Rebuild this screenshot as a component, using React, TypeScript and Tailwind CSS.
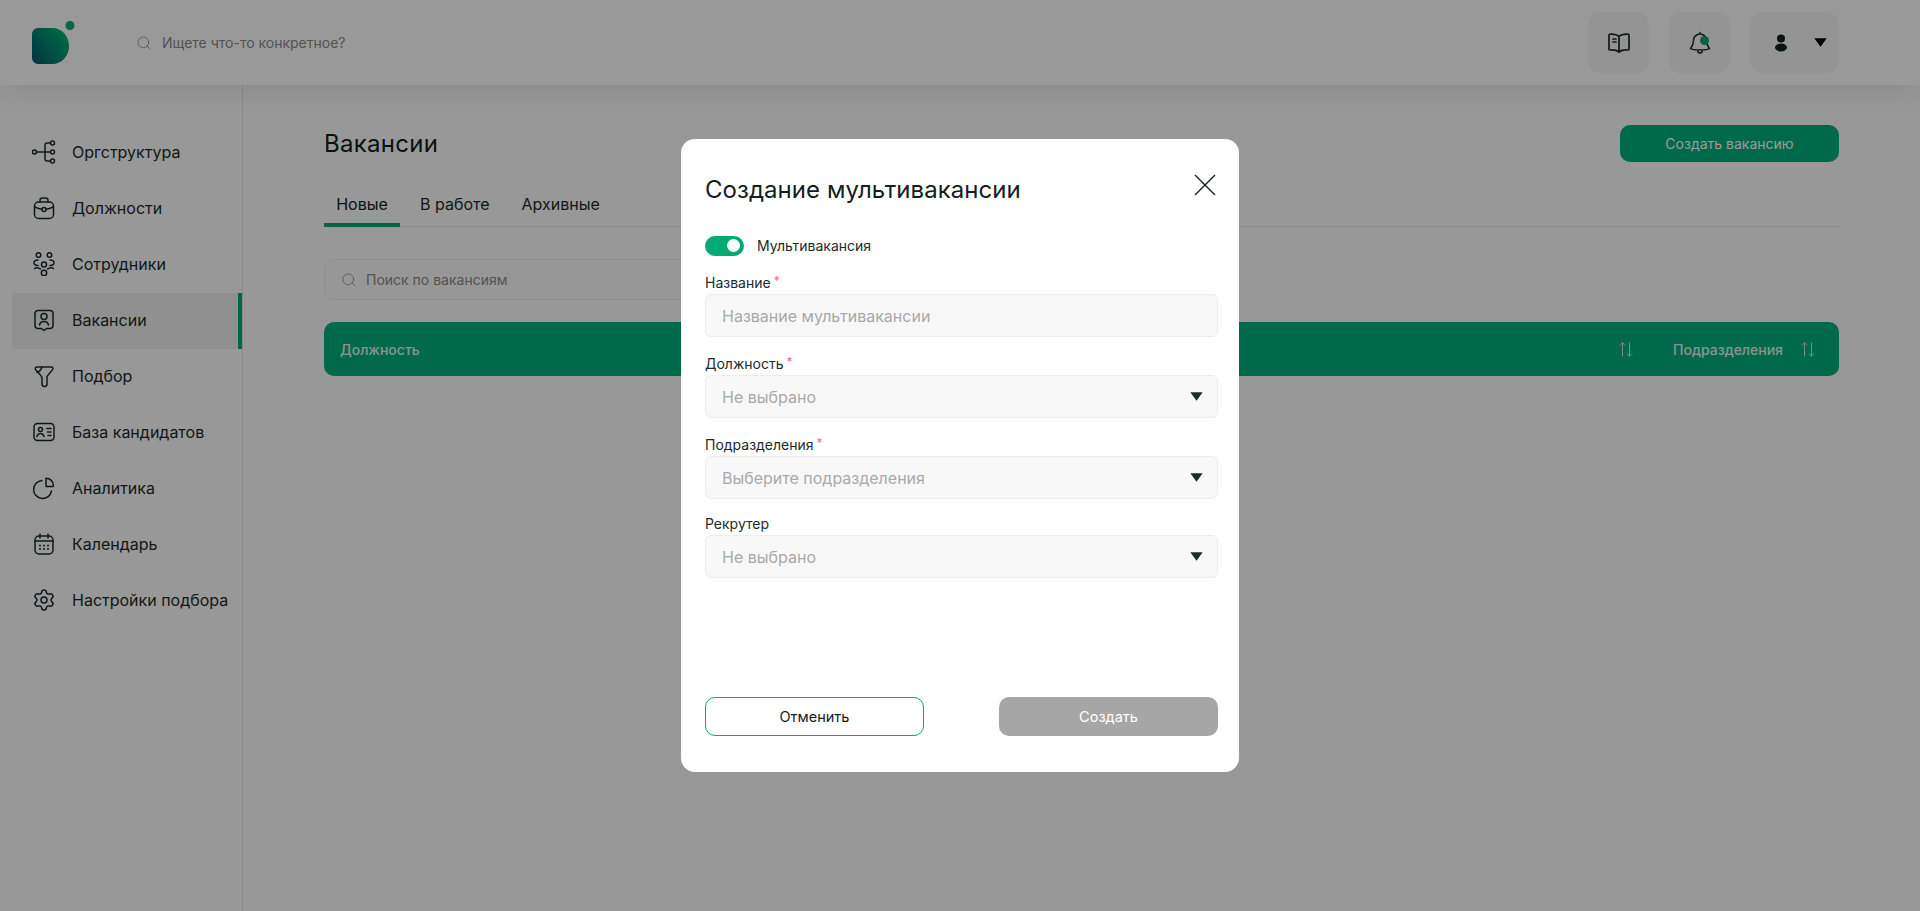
import { Search, Settings } from "lucide-react";
import type { ReactNode } from "react";

const font = { fontFamily: '"Inter", "Noto Sans", sans-serif' };

function Svg({ children, size = 24 }: { children: ReactNode; size?: number }) {
  return (
    <svg width={size} height={size} viewBox="0 0 24 24" fill="none" stroke="currentColor" strokeWidth="1.5" strokeLinecap="round" strokeLinejoin="round" className="shrink-0">
      {children}
    </svg>
  );
}

const icons: Record<string, ReactNode> = {
  org: (
    <Svg>
      <circle cx="2.500" cy="12" r="2" />
      <circle cx="20.500" cy="3" r="2" />
      <circle cx="20.500" cy="12" r="2" />
      <circle cx="20.500" cy="21" r="2" />
      <path d="M4.500 12h14M18.500 3H15a2 2 0 0 0-2 2v14a2 2 0 0 0 2 2h3.500" />
    </Svg>
  ),
  jobs: (
    <Svg>
      <rect x="2.500" y="6" width="19" height="16.500" rx="4" />
      <path d="M8 6V4.500a2.500 2.500 0 0 1 2.500-2.500h3A2.500 2.500 0 0 1 16 4.500V6" />
      <path d="M2.800 11c3 1.500 5 2 7.200 2.200M21.200 11c-3 1.500-5 2-7.200 2.200" />
      <circle cx="12" cy="13.500" r="2" />
    </Svg>
  ),
  staff: (
    <Svg>
      <circle cx="6.500" cy="3" r="2.300" />
      <circle cx="17.500" cy="3" r="2.300" />
      <circle cx="12" cy="12.500" r="2.500" />
      <circle cx="12" cy="21" r="2.700" />
      <path d="M6 8c-2.500 0-4 1.300-4 2.800S3.500 13.500 6 13.500M18 8c2.500 0 4 1.300 4 2.800s-1.500 2.700-4 2.700" />
      <path d="M2.500 16.500C3.500 15.800 6 15.700 8.500 17M21.500 16.500c-1-.7-3.500-.8-6 .5" />
    </Svg>
  ),
  vacancy: (
    <Svg>
      <path d="M6 2.500h12a3 3 0 0 1 3 3v12a3 3 0 0 1-3 3h-3.500L12 22.500l-2.500-2H6a3 3 0 0 1-3-3v-12a3 3 0 0 1 3-3Z" />
      <circle cx="12" cy="8.500" r="3" />
      <path d="M7.500 17c.5-2.500 2.500-3.500 4.500-3.500s4 1 4.500 3.500" />
    </Svg>
  ),
  funnel: (
    <Svg>
      <path d="M5 3h14.500a1.500 1.500 0 0 1 1.200 2.400L15 12.500V20a2.500 2.500 0 0 1-5 0v-6c0-1.500-1-2.500-2-3.500L3.800 6C2.500 4.500 3.500 3 5 3Z" />
      <path d="M5 8.500c2-1 4-1.500 5-5.500" />
    </Svg>
  ),
  base: (
    <Svg>
      <rect x="2" y="3.500" width="20" height="17" rx="3.500" />
      <circle cx="8.500" cy="9.500" r="2" />
      <path d="M5 16.500c.5-2 2-3 3.500-3s3 1 3.500 3M15 8.500h4M15.500 12h3.500M16 15.500h3" />
    </Svg>
  ),
  chart: (
    <Svg>
      <path d="M10 4.500A9 9 0 1 0 19.500 15" />
      <path d="M14 2.200a7.500 7.500 0 0 1 7.500 7.500c0 .5-.3.800-.8.800H14.500a.5.5 0 0 1-.5-.5V2.200Z" />
    </Svg>
  ),
  calendar: (
    <Svg>
      <rect x="3" y="4" width="18" height="18" rx="4" />
      <path d="M3 9h18M8 2v4M16 2v4" />
      <path d="M8 13.500h.01M12 13.500h.01M16 13.500h.01M8 17h.01M12 17h.01M16 17h.01" strokeWidth="2" />
    </Svg>
  ),
};

const nav = [
  { label: "Оргструктура", icon: icons.org },
  { label: "Должности", icon: icons.jobs },
  { label: "Сотрудники", icon: icons.staff },
  { label: "Вакансии", icon: icons.vacancy, active: true },
  { label: "Подбор", icon: icons.funnel },
  { label: "База кандидатов", icon: icons.base },
  { label: "Аналитика", icon: icons.chart },
  { label: "Календарь", icon: icons.calendar },
  { label: "Настройки подбора", icon: <Settings size={24} strokeWidth={1.5} className="shrink-0" /> },
];

function Caret({ className = "" }: { className?: string }) {
  return (
    <svg width="13" height="9" viewBox="0 0 13 9" className={className}>
      <path d="M0.300 0.300h12.400L6.500 8.700Z" fill="currentColor" />
    </svg>
  );
}

function SortIcon() {
  return (
    <svg width="14" height="15" viewBox="0 0 14 15" fill="none" stroke="#cfe8df" strokeWidth="1" className="shrink-0">
      <path d="M3.500 14.500V.8M.8 3.500 3.500.8l2.700 2.700M10.500.5v13.700M7.800 11.500l2.700 2.700 2.700-2.700" />
    </svg>
  );
}

function Field({ label, required, placeholder, select, labelGap }: { label: string; required?: boolean; placeholder: string; select?: boolean; labelGap: string }) {
  return (
    <div className={labelGap}>
      <div className="flex h-[18px] items-center text-[14px] leading-[18px] text-[#1c2b2b]">
        {label}
        {required && <span className="relative -top-[2px] ml-[3px] text-[12px] text-[#f4707c]">*</span>}
      </div>
      <div className="mt-[2px] flex h-[43px] items-center justify-between rounded-[6px] border border-[#ededed] bg-[#f8f8f8] pl-[16px] pr-[14px] text-[16px] text-[#a9a9a9]">
        <span>{placeholder}</span>
        {select && <Caret className="text-[#1c2b2b]" />}
      </div>
    </div>
  );
}

function Modal() {
  return (
    <div className="flex h-[633px] w-[558px] flex-col rounded-[14px] bg-white pb-[36px] pl-[24px] pr-[21px] pt-[33px]">
      <div className="flex items-start justify-between">
        <h2 className="text-[24px] leading-[36px] font-normal tracking-[0.050px] text-[#13201f]">Создание мультивакансии</h2>
        <svg width="22" height="22" viewBox="0 0 22 22" fill="none" stroke="#13201f" strokeWidth="1.400" className="mr-[2px] mt-[2px]">
          <path d="M1 1l20 20M21 1 1 21" />
        </svg>
      </div>
      <div className="mt-[27px] flex items-center gap-[13px]">
        <div className="flex h-[20px] w-[39px] items-center justify-end rounded-full bg-[#04aa74] pr-[4px]">
          <div className="h-[13px] w-[13px] rounded-full bg-white" />
        </div>
        <span className="text-[14px] text-[#1c2b2b]">Мультивакансия</span>
      </div>
      <Field labelGap="mt-[18px]" label="Название" required placeholder="Название мультивакансии" />
      <Field labelGap="mt-[18px]" label="Должность" required placeholder="Не выбрано" select />
      <Field labelGap="mt-[18px]" label="Подразделения" required placeholder="Выберите подразделения" select />
      <Field labelGap="mt-[16px]" label="Рекрутер" placeholder="Не выбрано" select />
      <div className="mt-auto flex justify-between text-[14.500px]">
        <button className="h-[39px] w-[219px] rounded-[10px] border border-[#04aa74] bg-white text-[#13201f]">Отменить</button>
        <button className="h-[39px] w-[219px] rounded-[10px] bg-[#a6a6a6] text-white">Создать</button>
      </div>
    </div>
  );
}

export default function App() {
  return (
    <div style={font} className="relative flex h-[911px] w-[1920px] flex-col overflow-hidden bg-[#fdfdfd] text-[#1c2b2b]">
      <header className="z-10 flex h-[85px] shrink-0 items-center justify-between bg-white pl-[32px] pr-[81px] shadow-[0_8px_24px_rgba(0,0,0,0.08)]">
        <div className="flex items-center">
          <svg width="44" height="44" viewBox="0 0 44 44">
            <defs>
              <linearGradient id="logo" x1="0" y1="1" x2="1" y2="0.300">
                <stop offset="0" stopColor="#00576f" />
                <stop offset="1" stopColor="#04b070" />
              </linearGradient>
            </defs>
            <path d="M6 8h14c10 0 17 8 17 18s-7 18-17 18H6a6 6 0 0 1-6-6V14a6 6 0 0 1 6-6Z" fill="url(#logo)" transform="translate(0 -1)" />
            <circle cx="38" cy="4.500" r="4.500" fill="#04b070" />
          </svg>
          <div className="ml-[60px] flex items-center gap-[10px] text-[14px] text-[#8a8a8a]">
            <Search size={16} strokeWidth={1.200} />
            <span>Ищете что-то конкретное?</span>
          </div>
        </div>
        <div className="flex gap-[20px]">
          <div className="flex h-[61px] w-[61px] items-center justify-center rounded-[12px] bg-[#f7f7f7]">
            <svg width="24" height="24" viewBox="0 0 24 24" fill="none" stroke="#1c2b2b" strokeWidth="1.700" strokeLinecap="round" strokeLinejoin="round">
              <path d="M12 5.500C10 3.500 6.500 3 3 3.200a1 1 0 0 0-1 1V18c0 .5.400 1 1 1 3.500-.2 7 .300 9 2 2-1.700 5.500-2.200 9-2 .6 0 1-.5 1-1V4.200a1 1 0 0 0-1-1C17.500 3 14 3.500 12 5.500ZM12 5.500V21" />
              <path d="M6 8h3M6 11h3" />
            </svg>
          </div>
          <div className="relative flex h-[61px] w-[61px] items-center justify-center rounded-[12px] bg-[#f7f7f7]">
            <svg width="24" height="24" viewBox="0 0 24 24" fill="none" stroke="#1c2b2b" strokeWidth="1.500" strokeLinecap="round" strokeLinejoin="round">
              <path d="M12 3a6.500 6.500 0 0 0-6.500 6.500c0 5-2.500 7-3 8 1 1 4 1.500 9.500 1.500s8.500-.5 9.500-1.500c-.5-1-3-3-3-8A6.500 6.500 0 0 0 12 3ZM12 3V1.500M9.500 19.500c.3 1.500 1.300 2.500 2.500 2.500s2.200-1 2.500-2.500" />
            </svg>
            <span className="absolute left-[31px] top-[24px] h-[9px] w-[9px] rounded-full bg-[#04aa74]" />
          </div>
          <div className="flex h-[61px] w-[89px] items-center rounded-[12px] bg-[#f7f7f7] pl-[23px]">
            <svg width="16" height="18" viewBox="0 0 16 18" fill="#13201f">
              <circle cx="8" cy="4.500" r="4" />
              <ellipse cx="8" cy="13.500" rx="6" ry="4" />
            </svg>
            <Caret className="ml-[25px] text-black" />
          </div>
        </div>
      </header>

      <div className="flex min-h-0 flex-1">
        <aside className="w-[243px] shrink-0 border-r border-[#e4e4e4] pl-[12px] pt-[40px]">
          {nav.map((item) => (
            <div key={item.label} className={`flex h-[56px] items-center pb-[2px] pl-[20px] ${item.active ? "border-r-[4px] border-[#04aa74] bg-[#f0f0f0]" : ""}`}>
              {item.icon}
              <span className="ml-[16px] text-[16px] whitespace-nowrap">{item.label}</span>
            </div>
          ))}
        </aside>

        <main className="flex-1 pl-[81px] pr-[81px] pt-[40px]">
          <div className="flex h-[37px] items-center justify-between">
            <h1 className="mt-[1px] text-[24px] font-normal tracking-[0.300px] text-[#13201f]">Вакансии</h1>
            <button className="h-[37px] w-[219px] rounded-[10px] bg-[#00af7b] text-[14px] text-white">Создать вакансию</button>
          </div>
          <div className="mt-[22px] flex h-[43px] items-end border-b-[1px] border-[#e4e4e4] text-[16px]">
            <div className="-mb-[1px] flex h-[43px] w-[76px] items-center justify-center border-b-[4px] border-[#04aa74] text-[#13201f]">Новые</div>
            <div className="ml-[20px] flex h-[43px] items-center pb-[2px]">В работе</div>
            <div className="ml-[32px] flex h-[43px] items-center pb-[2px]">Архивные</div>
          </div>
          <div className="mt-[32px] flex h-[41px] w-[400px] items-center gap-[9px] rounded-[10px] border border-[#ededed] bg-[#fcfcfc] pl-[16px] text-[14px] text-[#8a8a8a]">
            <Search size={16} strokeWidth={1.200} />
            <span>Поиск по вакансиям</span>
          </div>
          <div className="mt-[22px] flex h-[54px] items-center justify-between rounded-[10px] bg-[#00af7b] pl-[16px] pr-[24px] text-[14px] font-medium text-[#e6f5ef]">
            <span>Должность</span>
            <div className="flex items-center">
              <SortIcon />
              <span className="ml-[40px]">Подразделения</span>
              <span className="ml-[18px]">
                <SortIcon />
              </span>
            </div>
          </div>
        </main>
      </div>

      <div className="absolute inset-0 z-20 flex items-start justify-center bg-black/40 pt-[139px]">
        <Modal />
      </div>
    </div>
  );
}
